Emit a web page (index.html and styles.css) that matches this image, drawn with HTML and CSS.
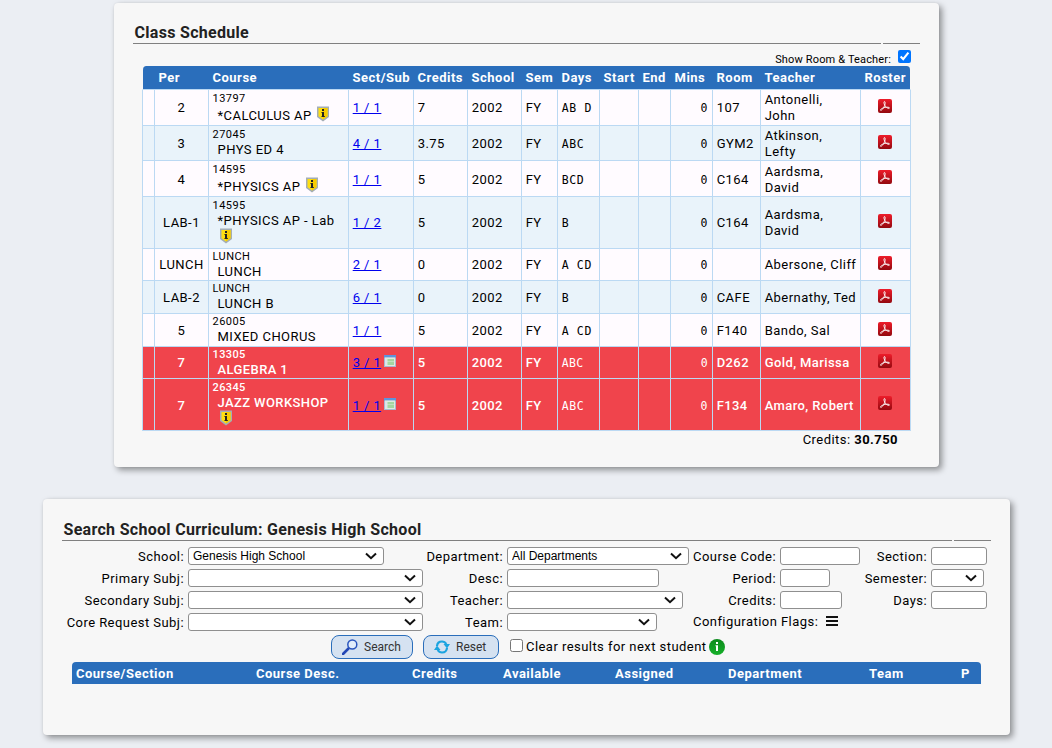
FILE: index.html
```html
<!DOCTYPE html>
<html lang="en">
<head>
  <meta charset="UTF-8">
  <title>Class Schedule</title>
  <link rel="stylesheet" href="styles.css">
</head>
<body>
  <!-- shared icons -->
  <svg class="defs" width="0" height="0">
    <linearGradient id="red" x1="0" y1="0" x2="0" y2="1">
      <stop offset="0" stop-color="#ee1c2a"/><stop offset="1" stop-color="#93090f"/>
    </linearGradient>
    <linearGradient id="green" x1="0" y1="0" x2="0" y2="1">
      <stop offset="0" stop-color="#0c8a1c"/><stop offset="1" stop-color="#16b02a"/>
    </linearGradient>
    <symbol id="shield" viewBox="0 0 12 16">
      <path d="M0 .5h12v10.500L6 15.500 0 11z" fill="#a3adb5"/>
      <path d="M1.500 2h9v8.200L6 13.600 1.500 10.200z" fill="#ffdf10"/>
      <path d="M6 2h4.500v8.200L6 13.600z" fill="#f8cc00"/>
      <path d="M5 3h2v2H5zM4.500 6H7v4h.8v1H4.500v-1H5V7h-.5z" fill="#222"/>
    </symbol>
    <symbol id="pdf" viewBox="0 0 14 14">
      <rect width="14" height="14" rx="2" fill="url(#red)"/>
      <path d="M6.300 2.600c1.200-.4 1 2.200.3 4.100C5.700 9 3.800 11.500 2.600 11.300c-1-.6 1.800-2.400 4.300-2.900 2.200-.4 4.700-.3 4.600.6-.2 1-2.600.1-3.900-1.400C6.200 6 5.400 3 6.300 2.600z" fill="none" stroke="#fff" stroke-width="0.900"/>
    </symbol>
    <symbol id="grid" viewBox="0 0 12 12">
      <rect width="12" height="12" fill="#a9b9cf"/>
      <rect width="12" height="2.500" fill="#5d94dc"/>
      <rect x="1" y="2.500" width="10" height="8.500" fill="#dfeadf"/>
      <path d="M3.500 4H10v2H3.500zM3.500 6.500H10V10H3.500z" fill="#a5d6a0"/>
      <path d="M1 4h2v6H1z" fill="#dde3ea"/>
    </symbol>
  </svg>

  <section class="panel schedule">
    <h2>Class Schedule</h2>
    <div class="rule"><span></span><span></span></div>
    <div class="show-room">
      <label for="showRoom">Show Room &amp; Teacher:</label>
      <input type="checkbox" id="showRoom" checked>
    </div>
    <table class="classes">
      <colgroup>
        <col class="c-flag"><col class="c-per"><col class="c-course"><col class="c-sect"><col class="c-credits">
        <col class="c-school"><col class="c-sem"><col class="c-days"><col class="c-start"><col class="c-end">
        <col class="c-mins"><col class="c-room"><col class="c-teacher"><col class="c-roster">
      </colgroup>
      <thead>
        <tr><th></th><th>Per</th><th>Course</th><th>Sect/Sub</th><th>Credits</th><th>School</th><th>Sem</th><th>Days</th><th>Start</th><th>End</th><th>Mins</th><th>Room</th><th>Teacher</th><th>Roster</th></tr>
      </thead>
      <tbody>
        <tr class="h36">
          <td></td><td class="per">2</td>
          <td class="course"><div class="code">13797</div><div class="name">*CALCULUS AP <svg class="shield"><use href="#shield"/></svg></div></td>
          <td><a href="#">1 / 1</a></td><td>7</td><td>2002</td><td>FY</td><td class="days">AB D</td><td></td><td></td><td class="mins">0</td><td>107</td>
          <td>Antonelli,<br>John</td><td class="roster"><svg><use href="#pdf"/></svg></td>
        </tr>
        <tr class="h35 low">
          <td></td><td class="per">3</td>
          <td class="course"><div class="code">27045</div><div class="name">PHYS ED 4</div></td>
          <td><a href="#">4 / 1</a></td><td>3.75</td><td>2002</td><td>FY</td><td class="days">ABC</td><td></td><td></td><td class="mins">0</td><td>GYM2</td>
          <td>Atkinson,<br>Lefty</td><td class="roster"><svg><use href="#pdf"/></svg></td>
        </tr>
        <tr class="h36 low">
          <td></td><td class="per">4</td>
          <td class="course"><div class="code">14595</div><div class="name">*PHYSICS AP <svg class="shield"><use href="#shield"/></svg></div></td>
          <td><a href="#">1 / 1</a></td><td>5</td><td>2002</td><td>FY</td><td class="days">BCD</td><td></td><td></td><td class="mins">0</td><td>C164</td>
          <td>Aardsma,<br>David</td><td class="roster"><svg><use href="#pdf"/></svg></td>
        </tr>
        <tr class="h52">
          <td></td><td class="per">LAB-1</td>
          <td class="course"><div class="code">14595</div><div class="name">*PHYSICS AP - Lab<br><svg class="shield"><use href="#shield"/></svg></div></td>
          <td><a href="#">1 / 2</a></td><td>5</td><td>2002</td><td>FY</td><td class="days">B</td><td></td><td></td><td class="mins">0</td><td>C164</td>
          <td>Aardsma,<br>David</td><td class="roster"><svg><use href="#pdf"/></svg></td>
        </tr>
        <tr class="h32">
          <td></td><td class="per">LUNCH</td>
          <td class="course"><div class="code">LUNCH</div><div class="name">LUNCH</div></td>
          <td><a href="#">2 / 1</a></td><td>0</td><td>2002</td><td>FY</td><td class="days">A CD</td><td></td><td></td><td class="mins">0</td><td></td>
          <td>Abersone, Cliff</td><td class="roster"><svg><use href="#pdf"/></svg></td>
        </tr>
        <tr class="h33 low">
          <td></td><td class="per">LAB-2</td>
          <td class="course"><div class="code">LUNCH</div><div class="name">LUNCH B</div></td>
          <td><a href="#">6 / 1</a></td><td>0</td><td>2002</td><td>FY</td><td class="days">B</td><td></td><td></td><td class="mins">0</td><td>CAFE</td>
          <td>Abernathy, Ted</td><td class="roster"><svg><use href="#pdf"/></svg></td>
        </tr>
        <tr class="h33 low">
          <td></td><td class="per">5</td>
          <td class="course"><div class="code">26005</div><div class="name">MIXED CHORUS</div></td>
          <td><a href="#">1 / 1</a></td><td>5</td><td>2002</td><td>FY</td><td class="days">A CD</td><td></td><td></td><td class="mins">0</td><td>F140</td>
          <td>Bando, Sal</td><td class="roster"><svg><use href="#pdf"/></svg></td>
        </tr>
        <tr class="h32 conflict">
          <td></td><td class="per">7</td>
          <td class="course"><div class="code">13305</div><div class="name">ALGEBRA 1</div></td>
          <td><a href="#">3 / 1</a><svg class="grid"><use href="#grid"/></svg></td><td>5</td><td>2002</td><td>FY</td><td class="days">ABC</td><td></td><td></td><td class="mins">0</td><td>D262</td>
          <td>Gold, Marissa</td><td class="roster"><svg><use href="#pdf"/></svg></td>
        </tr>
        <tr class="h52 low conflict">
          <td></td><td class="per">7</td>
          <td class="course"><div class="code">26345</div><div class="name">JAZZ WORKSHOP<br><svg class="shield"><use href="#shield"/></svg></div></td>
          <td><a href="#">1 / 1</a><svg class="grid"><use href="#grid"/></svg></td><td>5</td><td>2002</td><td>FY</td><td class="days">ABC</td><td></td><td></td><td class="mins">0</td><td>F134</td>
          <td>Amaro, Robert</td><td class="roster"><svg><use href="#pdf"/></svg></td>
        </tr>
      </tbody>
    </table>
    <div class="total">Credits: <b>30.750</b></div>
  </section>

  <section class="panel search">
    <h2>Search School Curriculum: Genesis High School</h2>
    <div class="rule"><span></span><span></span></div>
    <form class="fields">
      <label>School:</label><select class="w196"><option>Genesis High School</option></select>
      <label>Department:</label><select class="w182"><option>All Departments</option></select>
      <label>Course Code:</label><input type="text" class="w80">
      <label>Section:</label><input type="text" class="w56">

      <label>Primary Subj:</label><select class="w235"></select>
      <label>Desc:</label><input type="text" class="w152">
      <label>Period:</label><input type="text" class="w50">
      <label>Semester:</label><select class="w53"></select>

      <label>Secondary Subj:</label><select class="w235"></select>
      <label>Teacher:</label><select class="w176"></select>
      <label>Credits:</label><input type="text" class="w62">
      <label>Days:</label><input type="text" class="w56">

      <label>Core Request Subj:</label><select class="w235"></select>
      <label>Team:</label><select class="w150"></select>
      <div class="flags">Configuration Flags:
        <svg width="12" height="10" viewBox="0 0 12 10"><path d="M0 1h12M0 5h12M0 9h12" stroke="#111" stroke-width="1.800"/></svg>
      </div>
    </form>
    <div class="actions">
      <button class="btn btn-search">
        <svg width="16" height="16" viewBox="0 0 16 16">
          <path d="M1 15l5.500-5.500" stroke="#2347b5" stroke-width="2.600" stroke-linecap="round"/>
          <circle cx="10.300" cy="5.500" r="4.500" fill="#e2edfb" stroke="#2a55bd" stroke-width="1.500"/>
        </svg>Search
      </button>
      <button class="btn btn-reset">
        <svg width="16" height="14" viewBox="0 0 16 14">
          <path d="M3 6C3.300 3 5.500 1.500 8 1.500c1.800 0 3.400 1 4.300 2.500M13 8c-.3 3-2.500 4.500-5 4.500-1.800 0-3.400-1-4.300-2.500" fill="none" stroke="#1ba4e0" stroke-width="2.200"/>
          <path d="M9.500 4H16l-3 4.500zM6.500 10H0l3-4.500z" fill="#1ba4e0"/>
        </svg>Reset
      </button>
      <input type="checkbox" id="clearResults">
      <label for="clearResults">Clear results for next student</label>
      <svg class="info" width="16" height="16" viewBox="0 0 16 16">
        <circle cx="8" cy="8" r="8" fill="url(#green)"/>
        <path d="M7 3h2v2H7zM6.500 6.300H9V12H7V7.300h-.5z" fill="#fff"/>
      </svg>
    </div>
    <div class="results-head">
      <span>Course/Section</span><span>Course Desc.</span><span>Credits</span><span>Available</span><span>Assigned</span><span>Department</span><span>Team</span><span>P</span>
    </div>
  </section>
</body>
</html>
```
FILE: styles.css
```css
* {
  box-sizing: border-box;
}
body {
  margin: 0;
  height: 748px;
  overflow: hidden;
  padding-top: 3px;
  background: #ebeef3;
  color: #000;
  font-family: Roboto, sans-serif;
  font-size: 13px;
  letter-spacing: 0.45px;
  line-height: 16px;
}
.defs {
  position: absolute;
}
.panel {
  background: #f7f7f7;
  border-radius: 4px;
  box-shadow: 3px 3px 6px rgba(0,0,0,0.4), 0 0 2px rgba(0,0,0,0.08);
}
.schedule {
  width: 825px;
  height: 464px;
  margin-left: 114px;
  padding: 19px 19px 0;
}
.search {
  width: 967px;
  height: 236px;
  margin: 32px 0 0 43px;
  padding: 20px 19px 0;
}
h2 {
  margin: 0;
  padding-left: 1.5px;
  height: 21px;
  font-size: 16px;
  font-weight: 700;
  line-height: 21px;
  letter-spacing: 0.3px;
  color: #222;
}
.rule {
  display: flex;
  gap: 2px;
  height: 1px;
}
.rule span {
  flex: 1;
  background: #808080;
}
.rule span:last-child {
  flex: none;
  width: 37px;
}
input[type="checkbox"] {
  width: 13px;
  height: 13px;
  margin: 0;
}

/* class schedule */
.show-room {
  display: flex;
  justify-content: flex-end;
  gap: 7px;
  height: 22px;
  padding: 6px 9px 0 0;
  font-size: 11px;
  letter-spacing: 0.15px;
}
.show-room label {
  padding-top: 2px;
}
.classes {
  width: 769px;
  margin-left: 9px;
  table-layout: fixed;
  border-collapse: separate;
  border-spacing: 0;
}
.c-flag { width: 13px; }
.c-per { width: 54px; }
.c-course { width: 140px; }
.c-sect { width: 65px; }
.c-credits { width: 54px; }
.c-school { width: 54px; }
.c-sem { width: 36px; }
.c-days { width: 42px; }
.c-start { width: 39px; }
.c-end { width: 32px; }
.c-mins { width: 42px; }
.c-room { width: 48px; }
.c-teacher { width: 100px; }
.c-roster { width: 50px; }
th {
  height: 24px;
  padding: 0 0 0 3.5px;
  background: #2a6ebb;
  background-clip: padding-box;
  border-bottom: 1px solid #bbd9f3;
  color: #fff;
  font-weight: 700;
  letter-spacing: 0.5px;
  text-align: left;
  white-space: nowrap;
}
th:first-child {
  border-left: 1px solid transparent;
  border-top-left-radius: 4px;
}
th:last-child {
  border-right: 1px solid transparent;
  border-top-right-radius: 4px;
}
td {
  padding: 0 4px 0 3.7px;
  border-right: 1px solid #bbd9f3;
  border-bottom: 1px solid #bbd9f3;
  background: #fffbff;
  vertical-align: middle;
  white-space: nowrap;
}
td:first-child {
  border-left: 1px solid #bbd9f3;
}
tbody tr:nth-child(even) td {
  background: #e9f3fa;
}
tbody .conflict td,
tbody .conflict:nth-child(even) td {
  background: #f0444c;
  color: #fff;
  font-weight: 500;
  letter-spacing: 0.4px;
}
.conflict a {
  font-weight: 400;
}
.h32 { height: 32px; }
.h33 { height: 33px; }
.h35 { height: 35px; }
.h36 { height: 36px; }
.h52 { height: 52px; }
.low td {
  padding-top: 2px;
}
.low .course, .low .roster {
  padding-top: 0;
}
.per {
  padding: 0;
  text-align: center;
}
.course {
  padding-left: 3.5px;
}
.code {
  font-size: 11px;
  line-height: 14px;
}
.name {
  padding-left: 5px;
}
.h52 .name {
  padding-bottom: 3px;
  line-height: 15px;
}
.shield {
  width: 12px;
  height: 16px;
  margin: 0 2px;
  vertical-align: -2px;
}
.h52 .shield {
  vertical-align: -4px;
}
.grid {
  width: 12px;
  height: 12px;
  margin-left: 3px;
}
tbody .days, tbody .mins,
tbody .conflict .days, tbody .conflict .mins {
  font-family: "DejaVu Sans Mono", monospace;
  font-size: 11.5px;
  letter-spacing: 0.65px;
  white-space: pre;
}
.mins {
  text-align: right;
}
.roster {
  text-align: center;
}
.roster svg {
  width: 14px;
  height: 14px;
  vertical-align: -1px;
}
a {
  color: #0000ee;
}
.total {
  padding: 1px 22px 0 0;
  text-align: right;
}

/* curriculum search */
.fields {
  display: grid;
  grid-template-columns: 126px 235px 84px 182px 91px 80px 71px 60px;
  grid-auto-rows: 18px;
  row-gap: 4px;
  padding-top: 6px;
}
.fields label {
  padding-right: 4px;
  line-height: 19px;
  text-align: right;
  white-space: nowrap;
}
.fields input, .fields select {
  height: 18px;
  padding: 0 4px;
  background: #fff;
  border: 1px solid #8f8f8f;
  border-radius: 3px;
  color: #000;
  font-family: "Liberation Sans", sans-serif;
  font-size: 12px;
}
.fields select {
  appearance: none;
  background: #fff url("data:image/svg+xml,%3Csvg xmlns='http://www.w3.org/2000/svg' width='12' height='8'%3E%3Cpath d='M1 1.500l5 4.700 5-4.700' fill='none' stroke='%23111' stroke-width='2'/%3E%3C/svg%3E") no-repeat right 6px center;
}
.w50 { width: 50px; }
.w53 { width: 53px; }
.w56 { width: 56px; }
.w62 { width: 62px; }
.w80 { width: 80px; }
.w150 { width: 150px; }
.w152 { width: 152px; }
.w176 { width: 176px; }
.w182 { width: 182px; }
.w196 { width: 196px; }
.w235 { width: 235px; }
.flags {
  grid-column: 5 / 9;
  padding-left: 4px;
  line-height: 17px;
}
.flags svg {
  margin-left: 4px;
}
.actions {
  display: flex;
  align-items: center;
  height: 24px;
  margin: 4px 0 3px;
  padding-left: 269px;
}
.btn {
  display: flex;
  align-items: center;
  gap: 6px;
  height: 24px;
  margin-right: 10px;
  padding: 0 10px;
  background: #d5e2f1;
  border: 1px solid #2a6ebb;
  border-radius: 8px;
  color: #333;
  font-family: Roboto, sans-serif;
  font-size: 12px;
}
.btn-search {
  width: 82px;
}
.btn-reset {
  width: 76px;
}
.actions input {
  margin: -4px 3px 0 1px;
}
.info {
  margin-left: 3px;
}
.results-head {
  display: grid;
  grid-template-columns: 180px 156px 91px 112px 113px 141px 92px 24px;
  width: 909px;
  height: 22px;
  margin-left: 10px;
  background: #2a6ebb;
  border-radius: 4px 4px 0 0;
  color: #fff;
  font-weight: 700;
  letter-spacing: 0.5px;
  line-height: 23px;
}
.results-head span {
  padding-left: 4px;
}
```
